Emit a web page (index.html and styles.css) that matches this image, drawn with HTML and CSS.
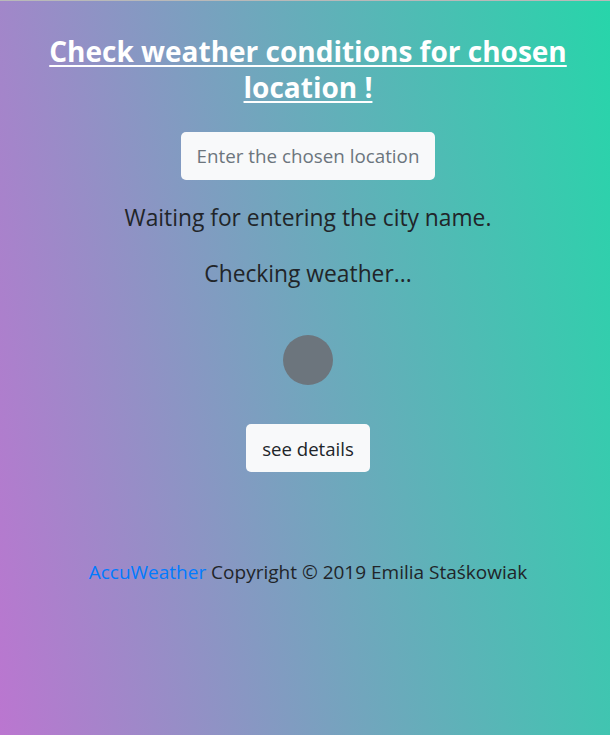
FILE: index.html
```html
<!DOCTYPE html>
<html lang="en">
<head>
<meta charset="utf-8">
<title>Weather</title>
<link rel="stylesheet" href="styles.css">
</head>
<body>
<main class="page">
  <h1 class="title"><a href="#" class="title-link">Check weather conditions for chosen location !</a></h1>
  <input class="location-input" type="text" placeholder="Enter the chosen location">
  <p class="status">Waiting for entering the city name.</p>
  <p class="status status-check">Checking weather...</p>
  <div class="spinner"></div>
  <button class="details-btn" type="button">see details</button>
  <footer class="footer"><a href="#" class="footer-link">AccuWeather</a> Copyright © 2019 Emilia Staśkowiak</footer>
</main>
</body>
</html>
```

FILE: styles.css
```css
html, body {
  margin: 0;
  height: 100%;
}
body {
  background: linear-gradient(80deg, #bb76d0 0%, #71a6bd 50%, #27d5aa 100%);
  border-top: 1px solid #b9b9b9;
  box-sizing: border-box;
  font-family: "Open Sans", "Noto Sans", sans-serif;
  color: #212529;
}
.page {
  display: flex;
  flex-direction: column;
  align-items: center;
  padding: 0 0 0 6px;
  text-align: center;
}
.title {
  margin: 32px 0 0;
  max-width: 540px;
  font-size: 28px;
  line-height: 36px;
  font-weight: 700;
}
.title-link {
  color: #fff;
  text-decoration: underline;
  text-decoration-thickness: 2px;
  text-underline-offset: 3px;
}
.location-input {
  margin-top: 27px;
  width: 254px;
  height: 48px;
  box-sizing: border-box;
  border: none;
  border-radius: 5px;
  background: #f8f9fa;
  padding: 0 10px;
  font-family: inherit;
  font-size: 18.8px;
  color: #495057;
  text-align: center;
}
.location-input::placeholder {
  color: #6c757d;
}
.status {
  margin: 23px 0 0;
  font-size: 22.8px;
  line-height: 30px;
}
.status-check {
  margin-top: 26px;
}
.spinner {
  margin-top: 46px;
  width: 50px;
  height: 50px;
  border-radius: 50%;
  background: #6c757d;
}
.details-btn {
  margin-top: 39px;
  width: 124px;
  height: 48px;
  border: none;
  border-radius: 5px;
  background: #f8f9fa;
  font-family: inherit;
  font-size: 18.6px;
  color: #212529;
  cursor: pointer;
}
.footer {
  margin-top: 87px;
  font-size: 19px;
  line-height: 26px;
}
.footer-link {
  color: #007bff;
  text-decoration: none;
}
```
